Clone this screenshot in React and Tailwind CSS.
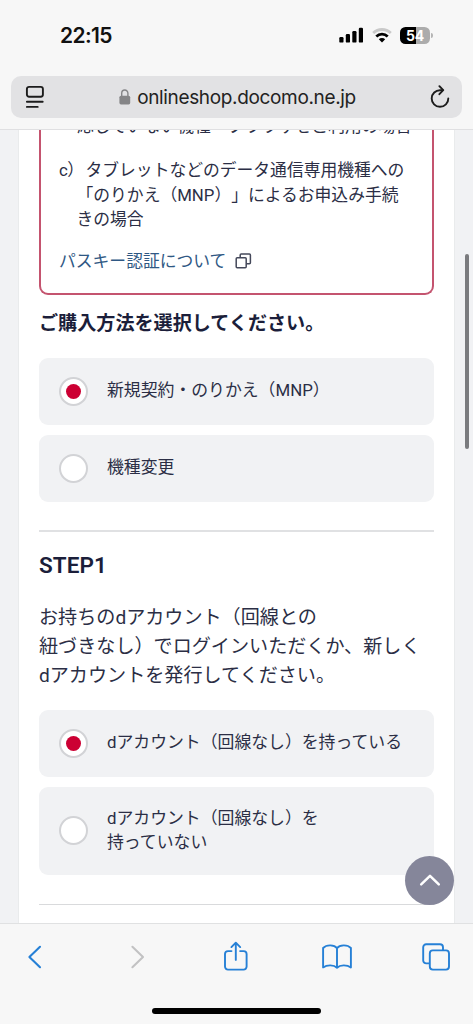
import React from "react";

function Radio({ checked }) {
  return (
    <span className="flex size-[29px] shrink-0 items-center justify-center rounded-full border-2 border-[#d2d3d6] bg-white">
      {checked && <span className="size-[15px] rounded-full bg-[#cc0033]" />}
    </span>
  );
}

function Option({ checked, tall, children }) {
  return (
    <label
      className={`flex items-center rounded-[9px] bg-[#f1f2f4] pl-5 ${tall ? "h-[88px]" : "h-[67px]"}`}
    >
      <Radio checked={checked} />
      <span className="ml-[19px] pb-[2px] text-[16.85px] leading-[24px] whitespace-nowrap">{children}</span>
    </label>
  );
}

function StatusBar() {
  return (
    <div className="flex h-[76px] items-start justify-between pt-[24px] pr-[40px] pl-[60px]">
      <span className="font-['Inter','Liberation_Sans',sans-serif] text-[21px] leading-[24px] font-semibold tracking-[-0.6px] text-[#111]">
        22:15
      </span>
      <div className="flex items-start pt-[3px]">
        <svg width="25" height="17" viewBox="0 0 25 17" fill="#000">
          <rect x="0.3" y="10" width="4.2" height="5.6" rx="1.2" />
          <rect x="6.8" y="7" width="4.2" height="8.6" rx="1.2" />
          <rect x="13.3" y="4" width="4.2" height="11.6" rx="1.2" />
          <rect x="19.8" y="0.8" width="4.2" height="14.8" rx="1.2" />
        </svg>
        <svg className="ml-[8px]" width="20" height="17" viewBox="0 0 20 17" fill="none">
          <path d="M1.2 6.1 A12.6 12.6 0 0 1 18.8 6.1" stroke="#c9c9c9" strokeWidth="2.8" />
          <path d="M4.3 9.4 A8.2 8.2 0 0 1 15.7 9.4" stroke="#000" strokeWidth="2.8" />
          <path d="M10 15.4 L6.8 12.2 A4.6 4.6 0 0 1 13.2 12.2 Z" fill="#000" />
        </svg>
        <div className="ml-[8px] flex items-center">
          <div className="flex h-[17px] w-[30px] items-center justify-center rounded-[5.5px] bg-[linear-gradient(90deg,#000_54%,#acacac_54%)] font-['Inter','Liberation_Sans',sans-serif] text-[14px] leading-none font-bold tracking-[-0.3px] text-white">
            54
          </div>
          <span className="ml-[1px] h-[5px] w-[2px] rounded-r-full bg-[#b5b5b5]" />
        </div>
      </div>
    </div>
  );
}

function AddressBar() {
  return (
    <div className="mx-[11px] flex h-[42px] items-center rounded-[10px] bg-[#e2e2e4] pr-[12px] pl-[14px]">
      <svg width="20" height="24" viewBox="0 0 20 24" fill="none" stroke="#1c1c1c" strokeWidth="1.9" strokeLinecap="round">
        <rect x="1.9" y="1.9" width="16" height="9.8" rx="2.2" />
        <path d="M1.9 16.8 H17.7 M1.9 21.9 H12.7" />
      </svg>
      <div className="flex flex-1 items-center justify-center">
        <svg width="12" height="17" viewBox="0 0 12 17">
          <path d="M2.7 8 V4.3 a3.1 3.3 0 0 1 6.2 0 V8" fill="none" stroke="#858587" strokeWidth="1.4" />
          <rect x="0.4" y="6.7" width="10.8" height="8.7" rx="1.6" fill="#858587" />
        </svg>
        <span className="ml-[6px] pt-[2px] font-['Inter','Liberation_Sans',sans-serif] text-[19px] leading-[24px] tracking-[-0.35px] whitespace-nowrap text-[#222]">
          onlineshop.docomo.ne.jp
        </span>
      </div>
      <svg width="20" height="24" viewBox="0 0 20 24" fill="none" stroke="#1c1c1c" strokeWidth="1.9" strokeLinecap="round" strokeLinejoin="round">
        <path d="M12.6 5.2 H10.2 A8.3 8.3 0 1 0 18.3 13.4" />
        <path d="M9.4 1.2 L13.2 5.2 L9.4 9.2" />
      </svg>
    </div>
  );
}

function NoticeBox() {
  return (
    <section className="h-[165px] overflow-hidden rounded-b-[9px] border-x-2 border-b-2 border-[#c4546f] pl-[18px] text-[16.8px] leading-[24.3px] whitespace-nowrap">
      <div className="-mt-[16px] pl-[18px]">応していない機種・ブラウザをご利用の場合</div>
      <div className="mt-[20px] flex">
        <span className="w-[26.5px] shrink-0 tracking-[-0.5px]">c）</span>
        <span>タブレットなどのデータ通信専用機種への</span>
      </div>
      <div className="pl-[17.5px]">「のりかえ（MNP）」によるお申込み手続</div>
      <div className="pl-[17.5px]">きの場合</div>
      <div className="mt-[18px] flex items-center text-[#2f5884]">
        <span>パスキー認証について</span>
        <svg className="ml-[9px]" width="17" height="17" viewBox="0 0 17 17" fill="none" stroke="#44485a" strokeWidth="1.5" strokeLinejoin="round">
          <rect x="1.2" y="4.8" width="10" height="10" rx="1" />
          <path d="M5.2 4.6 V1.9 a1 1 0 0 1 1-1 H14.4 a1 1 0 0 1 1 1 V9.8 a1 1 0 0 1-1 1 H11.4" />
        </svg>
      </div>
    </section>
  );
}

function BottomBar() {
  return (
    <footer className="h-[101px] shrink-0 overflow-hidden border-t border-[#e0e1e2] bg-[#f7f7f7]">
      <div className="-mx-[15px] grid h-[66px] grid-cols-5 place-items-center text-[#2680d6]">
        <svg className="mr-[2px]" width="17" height="24" viewBox="0 0 17 24" fill="none" stroke="currentColor" strokeWidth="2.1" strokeLinecap="round" strokeLinejoin="round">
          <path d="M14 1.8 L3.4 12 L14 22.2" />
        </svg>
        <svg className="ml-[4px]" width="17" height="24" viewBox="0 0 17 24" fill="none" stroke="#c2c2c3" strokeWidth="2.1" strokeLinecap="round" strokeLinejoin="round">
          <path d="M3.4 1.8 L14 12 L3.4 22.2" />
        </svg>
        <svg width="26" height="32" viewBox="0 0 26 32" fill="none" stroke="currentColor" strokeWidth="1.9" strokeLinecap="round" strokeLinejoin="round">
          <path d="M8.5 10.1 H5 a3 3 0 0 0-3 3 V25.6 a3 3 0 0 0 3 3 H20.6 a3 3 0 0 0 3-3 V13.1 a3 3 0 0 0-3-3 H17.1" />
          <path d="M12.8 18.9 V1.7 M8.4 6.1 L12.8 1.7 L17.2 6.1" />
        </svg>
        <svg width="30" height="26" viewBox="0 0 30 26" fill="none" stroke="currentColor" strokeWidth="1.9" strokeLinecap="round" strokeLinejoin="round">
          <path d="M15 4.2 C12.3 0.6 4.6 0.3 1.1 4 V23.4 C5 20.6 12 20.6 15 23.8 C18 20.6 25 20.6 28.9 23.4 V4 C25.4 0.3 17.7 0.6 15 4.2 Z M15 4.2 V23.8" />
        </svg>
        <svg className="mr-[3px]" width="30" height="28" viewBox="0 0 30 28" fill="none" stroke="currentColor" strokeWidth="1.9" strokeLinejoin="round">
          <rect x="8.8" y="7.4" width="19.2" height="19.2" rx="3" />
          <path d="M8.6 20.4 H5.2 a3 3 0 0 1-3-3 V4.2 a3 3 0 0 1 3-3 H19 a3 3 0 0 1 3 3 V7.2" />
        </svg>
      </div>
      <div className="mx-auto mt-[18px] h-[6px] w-[169px] rounded-full bg-black" />
    </footer>
  );
}

export default function App() {
  return (
    <div className="relative flex h-[1024px] w-[473px] flex-col overflow-hidden bg-[#f1f2f4] font-['Roboto','Noto_Sans_CJK_JP',sans-serif] text-[#2b2e45] [text-spacing-trim:space-all]">
      <header className="h-[130px] shrink-0 border-b border-[#e0e0e2] bg-[#f7f7f7]">
        <StatusBar />
        <AddressBar />
      </header>

      <main className="mx-[18px] h-[793px] shrink-0 overflow-hidden border-x border-[#e9ebec] bg-white px-[20px]">
        <NoticeBox />

        <h2 className="mt-[14px] text-[19.1px] leading-[29px] font-bold whitespace-nowrap text-[#1b1e3a]">
          ご購入方法を選択してください。
        </h2>
        <div className="mt-[19.5px] flex flex-col gap-[10px]">
          <Option checked>新規契約・のりかえ（MNP）</Option>
          <Option>機種変更</Option>
        </div>

        <hr className="mt-[28.5px] border-t-2 border-[#e0e1e3]" />

        <h2 className="mt-[19px] text-[22.5px] leading-[29px] font-semibold tracking-[0.1px] text-[#1b1e3a]">STEP1</h2>
        <p className="mt-[24.4px] text-[19.1px] leading-[28.8px] whitespace-nowrap">
          お持ちのdアカウント（回線との
          <br />
          紐づきなし）でログインいただくか、新しく
          <br />
          dアカウントを発行してください。
        </p>
        <div className="mt-[19.2px] flex flex-col gap-[10px]">
          <Option checked>dアカウント（回線なし）を持っている</Option>
          <Option tall>
            dアカウント（回線なし）を
            <br />
            持っていない
          </Option>
        </div>

        <hr className="mt-[29px] border-t-[1.5px] border-[#d9dadc]" />
      </main>

      <BottomBar />

      <div className="absolute top-[254px] right-[4px] h-[195px] w-[4px] rounded-full bg-[#7a7b7e]" />
      <button className="absolute top-[856px] left-[405px] flex size-[49px] items-center justify-center rounded-full bg-[#85869a]" aria-label="ページの先頭へ">
        <svg width="22" height="14" viewBox="0 0 22 14" fill="none" stroke="#fff" strokeWidth="2.5" strokeLinecap="round" strokeLinejoin="round">
          <path d="M2.2 10.4 L11 1.8 L19.8 10.4" />
        </svg>
      </button>
    </div>
  );
}
